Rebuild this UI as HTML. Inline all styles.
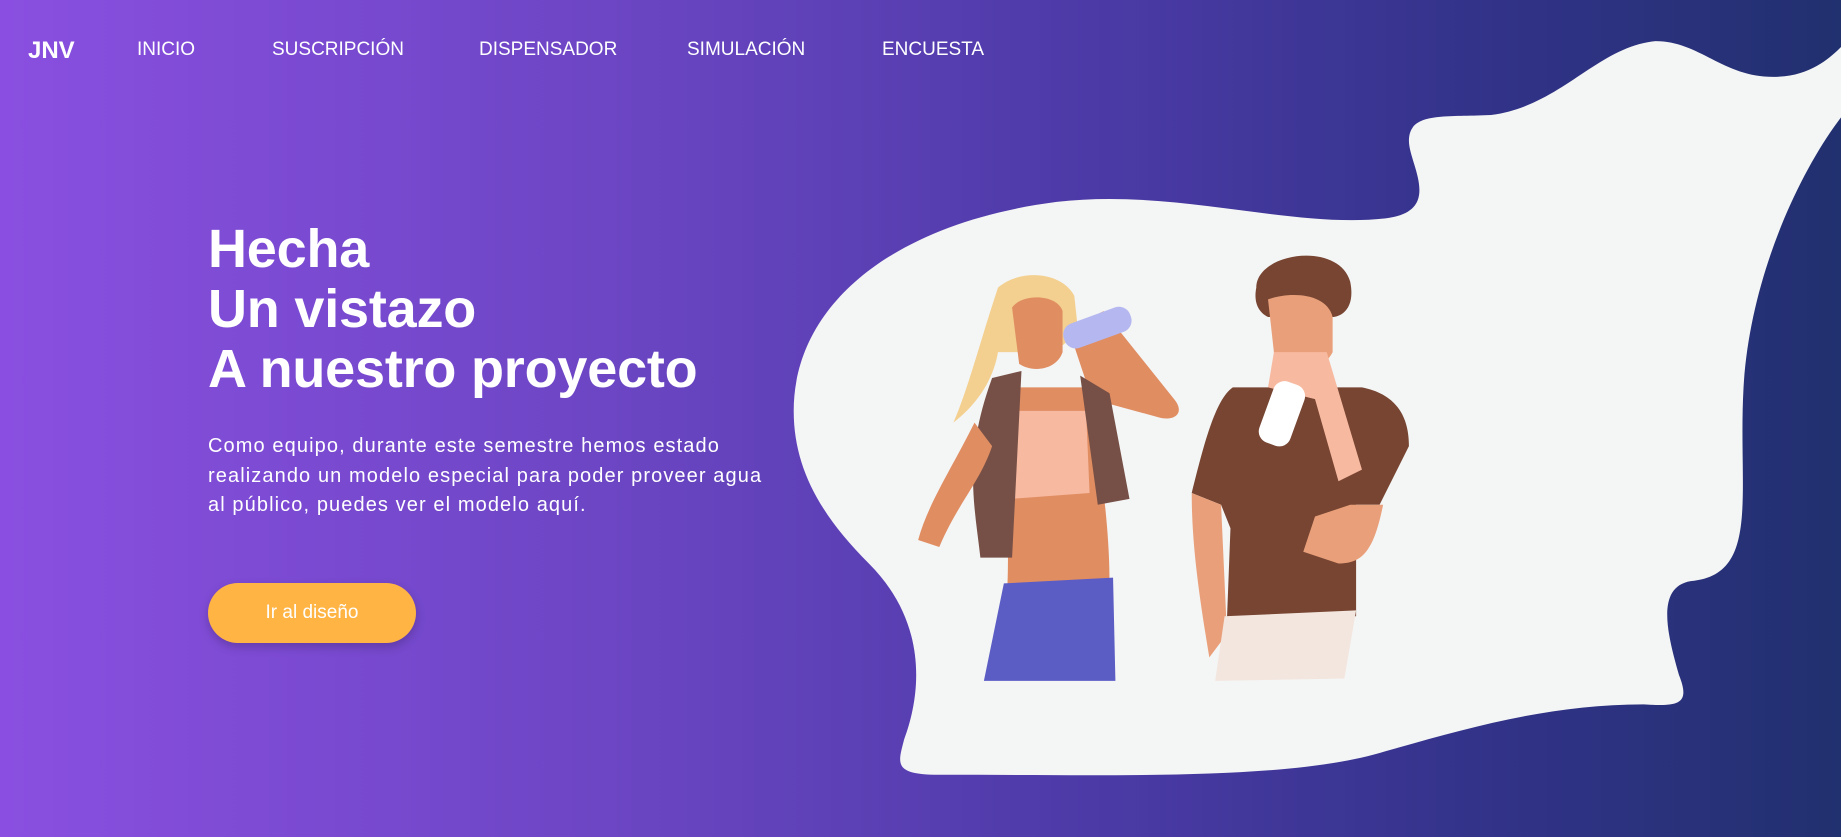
<!DOCTYPE html>
<html><head><meta charset="utf-8"><style>
html,body{margin:0;padding:0;width:1841px;height:837px;overflow:hidden}
body{background:linear-gradient(90deg,#8a4fe0 0%,#6a45c2 35%,#4b3aa6 60%,#33338a 80%,#21306f 100%);font-family:"Liberation Sans",sans-serif;color:#fff;position:relative}
svg.bg{position:absolute;left:0;top:0}
.nav{position:absolute;top:39px;font-size:19px;white-space:nowrap}
.logo{position:absolute;left:28px;top:37px;font-size:24px;font-weight:bold}
h1{position:absolute;left:208px;top:219px;margin:0;font-size:54px;line-height:60px;font-weight:bold;letter-spacing:-0.2px;white-space:nowrap}
p{position:absolute;left:208px;top:432px;margin:0;font-size:20px;line-height:29.5px;white-space:nowrap;letter-spacing:1.1px}
.btn{position:absolute;left:208px;top:583px;width:208px;height:60px;border-radius:30px;background:#ffb443;box-shadow:0 4px 10px rgba(0,0,0,.2);font-size:19px;text-align:center;line-height:60px}
</style></head><body>
<svg class="bg" width="1841" height="837" viewBox="0 0 1568 713" preserveAspectRatio="none">
<path fill="#f4f5f5" d="M676,350 C676,260 760,190 900,172 C1000,160 1100,195 1180,186 C1230,180 1200,140 1200,120 C1200,95 1230,100 1270,98 C1330,90 1360,40 1410,35 C1450,35 1470,70 1520,65 C1545,62 1560,48 1568,40 L1568,100 C1530,150 1490,240 1485,330 C1480,420 1500,490 1440,495 C1410,500 1420,540 1430,575 C1440,600 1430,602 1400,600 C1320,600 1250,620 1180,640 C1100,665 950,660 800,660 C760,660 765,650 770,630 C785,590 790,530 740,480 C700,440 676,400 676,350 Z"/>
<path fill="#f3d08f" d="M850,245 C870,228 905,232 915,252 L918,280 C905,300 880,310 870,300 L850,300 C845,330 825,350 812,360 C825,330 835,290 850,245Z"/>
<path fill="#e08d62" d="M862,262 C870,250 900,250 905,265 L905,300 C900,315 880,318 868,310Z"/>
<path fill="#e08d62" d="M910,280 L940,265 L1000,340 C1010,352 1000,360 985,355 L930,340Z"/>
<rect x="905" y="268" width="60" height="22" rx="10" fill="#b5b8f0" transform="rotate(-20 935 280)"/>
<path fill="#e08d62" d="M860,330 L925,330 C940,400 945,460 945,495 L858,500 C860,450 855,400 860,330Z"/>
<path fill="#f7b9a0" d="M860,350 L925,350 L928,420 L860,425Z"/>
<path fill="#765046" d="M845,322 L870,316 L862,475 L835,475 C830,430 820,390 845,322Z M920,320 L945,335 L962,425 L935,430Z"/>
<path fill="#e08d62" d="M830,360 C810,400 790,430 782,460 L800,466 C815,430 835,410 845,380Z"/>
<path fill="#5b5dc5" d="M855,497 L948,492 L950,580 L838,580Z"/>
<path fill="#774532" d="M1070,245 C1070,215 1140,205 1150,240 C1155,265 1140,270 1135,270 L1080,270 C1070,265 1068,255 1070,245Z"/>
<path fill="#e9a07a" d="M1080,255 C1100,248 1130,250 1135,270 L1135,300 C1125,320 1095,320 1085,300Z"/>
<path fill="#774532" d="M1050,330 L1160,330 C1185,335 1200,350 1200,380 L1175,430 L1155,430 L1155,525 L1045,528 L1048,450 L1040,430 L1015,420 C1025,380 1035,340 1050,330Z"/>
<path fill="#f7b9a0" d="M1085,300 L1130,300 L1160,400 L1140,410 L1120,340 L1080,330Z"/>
<rect x="1078" y="325" width="28" height="55" rx="10" fill="#fff" transform="rotate(20 1092 352)"/>
<path fill="#e9a07a" d="M1015,420 L1040,430 L1045,540 L1030,560 C1020,500 1015,460 1015,420Z M1150,430 L1178,430 C1170,470 1160,480 1140,480 L1110,470 L1120,440Z"/>
<path fill="#f3e6de" d="M1043,525 L1155,520 L1145,578 L1035,580Z"/>
</svg>
<div class="logo">JNV</div>
<div class="nav" style="left:137px">INICIO</div>
<div class="nav" style="left:272px">SUSCRIPCIÓN</div>
<div class="nav" style="left:479px">DISPENSADOR</div>
<div class="nav" style="left:687px">SIMULACIÓN</div>
<div class="nav" style="left:882px">ENCUESTA</div>
<h1>Hecha<br>Un vistazo<br>A nuestro proyecto</h1>
<p>Como equipo, durante este semestre hemos estado<br>realizando un modelo especial para poder proveer agua<br>al público, puedes ver el modelo aquí.</p>
<div class="btn">Ir al diseño</div>
</body></html>
